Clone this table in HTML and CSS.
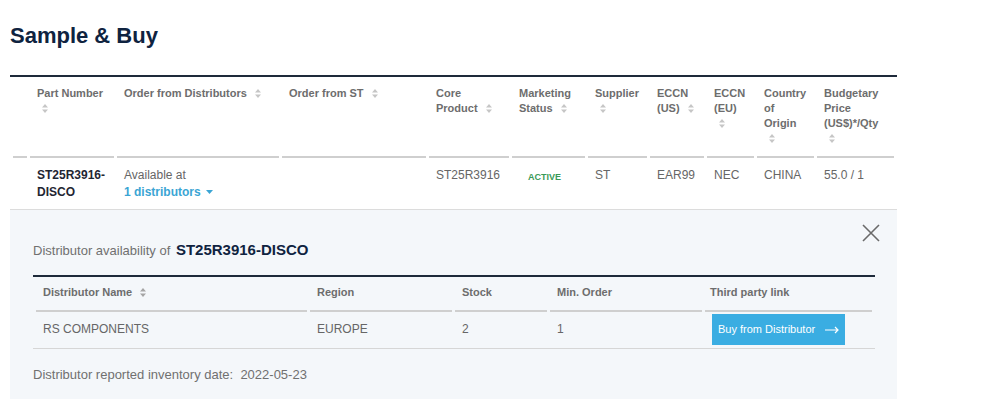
FILE: index.html
```html
<!DOCTYPE html>
<html lang="en">
<head>
    <meta charset="UTF-8">
    <title>Sample &amp; Buy</title>
    <link rel="stylesheet" href="styles.css">
</head>
<body>

<div class="page">
    <h1 class="page-title">Sample &amp; Buy</h1>

    <div class="results">
        <table class="parts">
            <colgroup>
                <col class="c-expand">
                <col class="c-part">
                <col class="c-dist">
                <col class="c-st">
                <col class="c-core">
                <col class="c-status">
                <col class="c-supplier">
                <col class="c-eccn-us">
                <col class="c-eccn-eu">
                <col class="c-country">
                <col class="c-price">
            </colgroup>
            <thead>
                <tr>
                    <th></th>
                    <th>Part Number <span class="sort"><svg width="6" height="9" viewBox="0 0 6 9"><path d="M3 0L6 3.5H0Z M0 5.5H6L3 9Z"/></svg></span></th>
                    <th>Order from Distributors <span class="sort"><svg width="6" height="9" viewBox="0 0 6 9"><path d="M3 0L6 3.5H0Z M0 5.5H6L3 9Z"/></svg></span></th>
                    <th>Order from ST <span class="sort"><svg width="6" height="9" viewBox="0 0 6 9"><path d="M3 0L6 3.5H0Z M0 5.5H6L3 9Z"/></svg></span></th>
                    <th>Core Product <span class="sort"><svg width="6" height="9" viewBox="0 0 6 9"><path d="M3 0L6 3.5H0Z M0 5.5H6L3 9Z"/></svg></span></th>
                    <th>Marketing Status <span class="sort"><svg width="6" height="9" viewBox="0 0 6 9"><path d="M3 0L6 3.5H0Z M0 5.5H6L3 9Z"/></svg></span></th>
                    <th>Supplier <span class="sort"><svg width="6" height="9" viewBox="0 0 6 9"><path d="M3 0L6 3.5H0Z M0 5.5H6L3 9Z"/></svg></span></th>
                    <th>ECCN (US) <span class="sort"><svg width="6" height="9" viewBox="0 0 6 9"><path d="M3 0L6 3.5H0Z M0 5.5H6L3 9Z"/></svg></span></th>
                    <th>ECCN (EU) <span class="sort"><svg width="6" height="9" viewBox="0 0 6 9"><path d="M3 0L6 3.5H0Z M0 5.5H6L3 9Z"/></svg></span></th>
                    <th>Country of Origin <span class="sort"><svg width="6" height="9" viewBox="0 0 6 9"><path d="M3 0L6 3.5H0Z M0 5.5H6L3 9Z"/></svg></span></th>
                    <th>Budgetary Price (US$)*/Qty <span class="sort"><svg width="6" height="9" viewBox="0 0 6 9"><path d="M3 0L6 3.5H0Z M0 5.5H6L3 9Z"/></svg></span></th>
                </tr>
            </thead>
            <tbody>
                <tr>
                    <td></td>
                    <td class="part-no">ST25R3916-DISCO</td>
                    <td>
                        Available at<br>
                        <a href="#" class="dist-link">1 distributors <svg width="7" height="4" viewBox="0 0 7 4"><path d="M0 0H7L3.5 4Z"/></svg></a>
                    </td>
                    <td></td>
                    <td>ST25R3916</td>
                    <td><span class="badge-active">ACTIVE</span></td>
                    <td>ST</td>
                    <td>EAR99</td>
                    <td>NEC</td>
                    <td>CHINA</td>
                    <td>55.0 / 1</td>
                </tr>
            </tbody>
        </table>

        <!-- aufgeklappte Händlerliste -->
        <div class="dist-panel">
            <div class="panel-head">
                <p class="panel-title">Distributor availability of <strong>ST25R3916-DISCO</strong></p>
                <button class="close-btn" aria-label="Close">
                    <svg width="18" height="18" viewBox="0 0 18 18"><path d="M1 1L17 17M17 1L1 17"/></svg>
                </button>
            </div>

            <div class="dist-wrap">
                <table class="dist-table">
                    <colgroup>
                        <col class="d-name">
                        <col class="d-region">
                        <col class="d-stock">
                        <col class="d-min">
                        <col class="d-link">
                    </colgroup>
                    <thead>
                        <tr>
                            <th>Distributor Name <span class="sort dark"><svg width="6" height="9" viewBox="0 0 6 9"><path d="M3 0L6 3.5H0Z M0 5.5H6L3 9Z"/></svg></span></th>
                            <th>Region</th>
                            <th>Stock</th>
                            <th>Min. Order</th>
                            <th class="link-col">Third party link</th>
                        </tr>
                    </thead>
                    <tbody>
                        <tr>
                            <td>RS COMPONENTS</td>
                            <td>EUROPE</td>
                            <td>2</td>
                            <td>1</td>
                            <td class="link-col">
                                <a href="#" class="buy-btn">Buy from Distributor
                                    <svg width="14" height="8" viewBox="0 0 14 8"><path d="M0 4H13M10 1L13 4L10 7"/></svg>
                                </a>
                            </td>
                        </tr>
                    </tbody>
                </table>
            </div>

            <p class="inventory-date">Distributor reported inventory date:&nbsp; 2022-05-23</p>
        </div>
    </div>
</div>

</body>
</html>
```

FILE: styles.css
```css
/* Grundlayout */
body {
    margin: 0;
    font-family: "Liberation Sans", Arial, sans-serif;
    color: #666;
    background-color: #fff;
}

.page {
    width: 887px;
    padding: 23px 0 0 10px;
}

.page-title {
    margin: 0 0 27px;
    font-size: 22px;
    line-height: 25px;
    font-weight: bold;
    color: #0f2340;
}

/* Ergebnistabelle */
.results {
    border-top: 2px solid #1e2a3a;
}

.parts {
    width: 100%;
    table-layout: fixed;
    border-collapse: separate;
    border-spacing: 3px 0;
}

.c-expand { width: 14px; }
.c-part { width: 84px; }
.c-dist { width: 162px; }
.c-st { width: 144px; }
.c-core { width: 80px; }
.c-status { width: 73px; }
.c-supplier { width: 59px; }
.c-eccn-us { width: 54px; }
.c-eccn-eu { width: 47px; }
.c-country { width: 57px; }
.c-price { width: 77px; }

.parts th {
    text-align: left;
    vertical-align: top;
    font-size: 11px;
    line-height: 15px;
    font-weight: bold;
    color: #6d6d6d;
    padding: 9px 7px 10px;
    border-bottom: 2px solid #cfcfcf;
}

.parts td {
    vertical-align: top;
    font-size: 12px;
    line-height: 17px;
    padding: 9px 7px 8px;
    color: #666;
}

.sort {
    display: inline-block;
    margin-left: 5px;
    vertical-align: -1px;
}

.sort svg {
    display: block;
    fill: #c6c6c6;
}

.sort.dark svg {
    fill: #a5a5a5;
}

.parts td.part-no {
    font-weight: bold;
    color: #1f2633;
}

.dist-link {
    color: #3ba5d4;
    font-weight: bold;
    text-decoration: none;
}

.dist-link svg {
    fill: #3ba5d4;
    vertical-align: 2px;
    margin-left: 2px;
}

.badge-active {
    display: inline-block;
    padding: 2px 9px;
    font-size: 9px;
    font-weight: bold;
    color: #3a9a58;
}

/* Aufgeklapptes Händler-Panel */
.dist-panel {
    border-top: 1px solid #dcdcdc;
    background-color: #f4f7fa;
    padding: 14px 17px 20px 23px;
}

.panel-head {
    display: flex;
    justify-content: space-between;
    align-items: flex-start;
}

.panel-title {
    margin: 16px 0 0;
    font-size: 13px;
    line-height: 20px;
    color: #707070;
}

.panel-title strong {
    font-size: 15px;
    color: #0f2340;
    margin-left: 2px;
}

.close-btn {
    background: none;
    border: none;
    padding: 0;
    cursor: pointer;
    width: 18px;
    height: 18px;
}

.close-btn svg {
    display: block;
    stroke: #6a6a6a;
    stroke-width: 1.6;
}

.dist-wrap {
    margin: 14px 5px 0 0;
    border-top: 2px solid #1e2a3a;
}

.dist-table {
    width: 100%;
    table-layout: fixed;
    border-collapse: separate;
    border-spacing: 3px 0;
    border-bottom: 1px solid #d6d6d6;
}

.d-name { width: 271px; }
.d-region { width: 142px; }
.d-stock { width: 92px; }
.d-min { width: 152px; }
.d-link { width: 167px; }

.dist-table th {
    text-align: left;
    font-size: 11px;
    line-height: 15px;
    font-weight: bold;
    color: #6d6d6d;
    padding: 8px 7px 10px;
    border-bottom: 2px solid #cfcfcf;
}

.dist-table td {
    font-size: 12px;
    line-height: 17px;
    color: #666;
    padding: 2px 7px 3px;
    height: 31px;
    vertical-align: middle;
}

.dist-table .link-col {
    padding-left: 5px;
}

.dist-table td.link-col {
    padding-left: 7px;
}

.buy-btn {
    display: inline-flex;
    align-items: center;
    gap: 10px;
    height: 31px;
    padding: 0 6px;
    background-color: #3aade2;
    color: #fff;
    font-size: 11px;
    text-decoration: none;
}

.buy-btn svg {
    fill: none;
    stroke: #fff;
    stroke-width: 1.2;
}

.inventory-date {
    margin: 17px 0 0;
    font-size: 13px;
    line-height: 17px;
    color: #707070;
}
```
